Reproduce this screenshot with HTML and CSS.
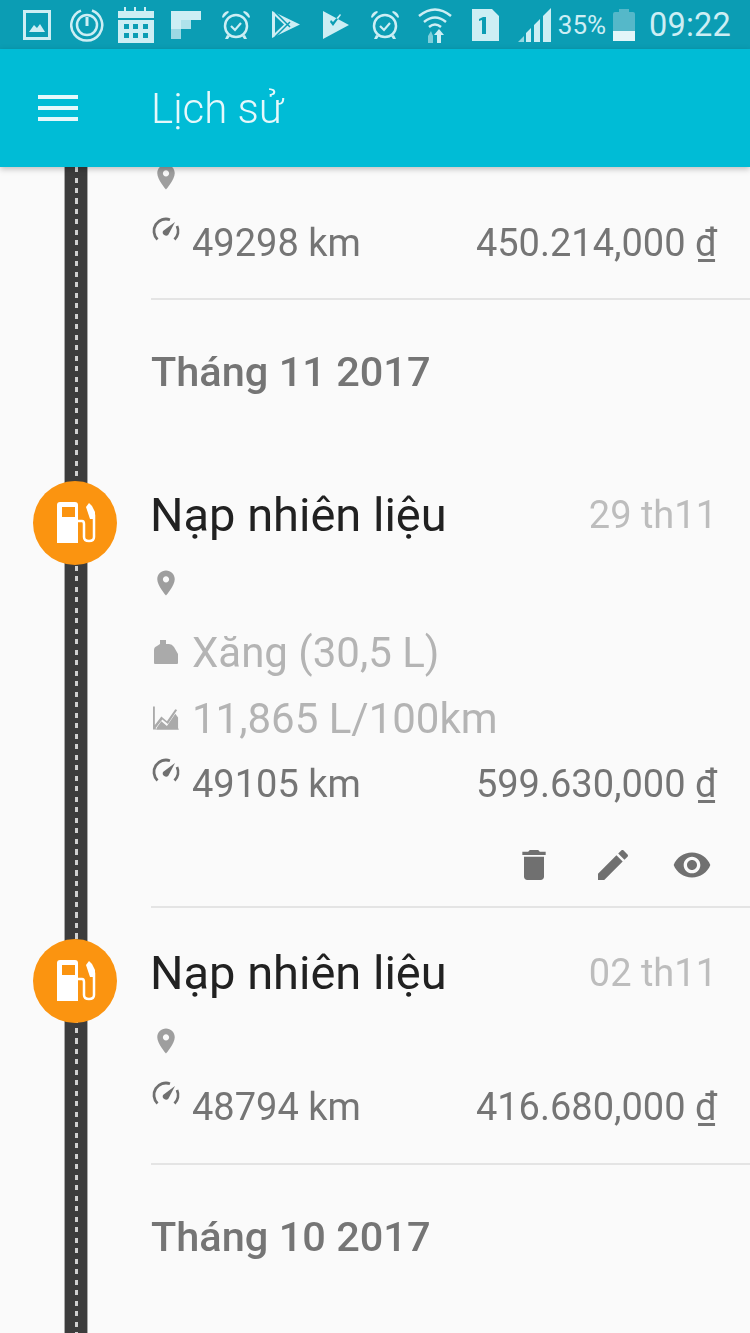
FILE: index.html
```html
<!DOCTYPE html>
<html lang="en">
<head>
    <meta charset="UTF-8">
    <meta name="viewport" content="width=device-width, initial-scale=1.0">
    <title>Lịch sử</title>
    <link rel="stylesheet" href="styles.css">
</head>
<body>
    <svg class="sprites" aria-hidden="true">
        <symbol id="i-pin" viewBox="0 0 24 24"><path d="M12 2C8.130 2 5 5.130 5 9c0 5.250 7 13 7 13s7-7.750 7-13c0-3.870-3.130-7-7-7zm0 9.500c-1.380 0-2.500-1.120-2.500-2.500s1.120-2.500 2.500-2.500 2.500 1.120 2.500 2.500-1.120 2.500-2.500 2.500z"/></symbol>
        <symbol id="i-gauge" viewBox="0 0 30 30">
            <path fill="none" stroke="currentColor" stroke-width="2.800" d="M6.500 23.500A12 12 0 0 1 19 3.700M26 10a12 12 0 0 1-2.500 13.500"/>
            <path d="M24 6 17.500 18.500a3.300 3.300 0 0 1-5.500-3.500z"/>
        </symbol>
        <symbol id="i-fuel" viewBox="0 0 84 84">
            <path fill="#fff" d="M24 24q0-3 3-3h15q3 0 3 3v38H24z"/>
            <rect x="29" y="26" width="13" height="10" fill="#fb9410"/>
            <path fill="none" stroke="#fff" stroke-width="2.500" d="M45 40h4q2 0 2 3v13q0 4 5 4t5-4V34l-4-8"/>
            <path fill="#fff" d="M53 26l3-4 3 3 3 6v7h-5z"/>
        </symbol>
        <symbol id="i-alarm" viewBox="0 0 32 32">
            <circle cx="16" cy="17" r="11" fill="none" stroke="currentColor" stroke-width="2.500"/>
            <path d="M2 8q1-5 6-6l1 1-6 6zM30 8q-1-5-6-6l-1 1 6 6zM7 26l-2 4h3l2-3zM25 26l2 4h-3l-2-3z"/>
            <path d="M11 17l4 4 6-7" fill="none" stroke="currentColor" stroke-width="2.200"/>
        </symbol>
    </svg>

    <div class="status-bar">
        <span class="slot">
            <svg width="28" height="30" viewBox="0 0 28 30"><path fill-rule="evenodd" d="M0 0h28v30H0zM3 3v24h22V3z"/><path d="M6 22l5-7 3 3 3-4 5 8z"/></svg>
        </span>
        <span class="slot">
            <svg width="34" height="34" viewBox="0 0 34 34"><path fill="none" stroke="currentColor" stroke-width="2.500" d="M22 2.500a15.500 15.500 0 1 1-11 .2"/><circle cx="17" cy="17" r="10" fill="none" stroke="currentColor" stroke-width="2.500"/><path d="M15.500 9h3v9h-3z"/></svg>
        </span>
        <span class="slot">
            <svg width="36" height="36" viewBox="0 0 36 36"><path d="M0 4h6V0h2v4h8V0h2v4h8V0h2v4h8v7H0z"/><path fill-rule="evenodd" d="M0 13h36v23H0zM6 17v5h5v-5zM15 17v5h5v-5zM25 17v5h5v-5zM6 26v5h5v-5zM15 26v5h5v-5zM25 26v5h5v-5z"/></svg>
        </span>
        <span class="slot">
            <svg width="30" height="28" viewBox="0 0 30 28"><path d="M0 0h30v9H10v9H0z"/><path opacity=".75" d="M0 18h10v10H0z"/><path opacity=".85" d="M10 9h10v9H10z"/></svg>
        </span>
        <span class="slot"><svg width="32" height="32"><use href="#i-alarm"/></svg></span>
        <span class="slot">
            <svg width="28" height="27" viewBox="0 0 28 27"><path fill-rule="evenodd" d="M0 0l28 13.500L0 27zM3 5v17l9-8.500z"/><path fill="none" stroke="#0b9db4" stroke-width="1.500" d="M3 1l15 15M3 26l15-15"/></svg>
        </span>
        <span class="slot">
            <svg width="26" height="28" viewBox="0 0 26 28"><path fill-rule="evenodd" d="M0 0l26 14L0 28zM7 11l3 4 8-11-1-1-7 8-2-2z"/></svg>
        </span>
        <span class="slot"><svg width="32" height="32"><use href="#i-alarm"/></svg></span>
        <span class="slot">
            <svg width="34" height="36" viewBox="0 0 34 36"><g fill="none" stroke="currentColor" stroke-width="2.500"><path d="M1 9q16-13 32 0"/><path d="M6 15q11-9 22 0"/><path d="M11 20q6-5 12 0"/></g><path opacity=".6" d="M10 36v-7l3-5 2 5v7z"/><path d="M21 22l5 6h-3v8h-4v-8h-3z"/></svg>
        </span>
        <span class="slot">
            <svg width="27" height="32" viewBox="0 0 27 32"><path fill-rule="evenodd" d="M0 0h20l7 7v25H0zM11 8l-4 2v2l3-1v14h4V8z"/></svg>
        </span>
        <span class="slot">
            <svg width="34" height="34" viewBox="0 0 34 34"><path opacity=".7" d="M0 34l6-6v6z"/><path d="M8 34V25l5-5v14zM16 34V17l6-6v23zM25 34V8l8-8v34z"/></svg>
        </span>
        <span class="battery-text">35%</span>
        <span class="battery"><span class="battery-level"></span></span>
        <span class="clock">09:22</span>
    </div>

    <header class="toolbar">
        <span class="menu-icon"><i></i><i></i><i></i></span>
        <h1>Lịch sử</h1>
    </header>

    <main class="timeline">
        <section class="entry">
            <div class="pin-stub"><svg class="icon-pin"><use href="#i-pin"/></svg></div>
            <div class="row odo-row first-odo">
                <svg class="icon-gauge"><use href="#i-gauge"/></svg>
                <span class="odo">49298 km</span>
                <span class="price">450.214,000 ₫</span>
            </div>
        </section>

        <h2 class="month">Tháng 11 2017</h2>

        <section class="entry full">
            <div class="marker"><svg width="84" height="84"><use href="#i-fuel"/></svg></div>
            <div class="title-row">
                <h3>Nạp nhiên liệu</h3>
                <span class="date">29 th11</span>
            </div>
            <div class="row pin-row"><svg class="icon-pin"><use href="#i-pin"/></svg></div>
            <div class="row muted fuel-row">
                <svg class="icon-small" viewBox="0 0 24 26"><path d="M0 11q0-3 3-4l3-2V1h6v4h3q3 0 5 3l4 7v9q0 1-1 1H1q-1 0-1-1z"/></svg>
                <span>Xăng (30,5 L)</span>
            </div>
            <div class="row muted">
                <svg class="icon-small" viewBox="0 0 28 25"><path d="M0 0h2v20l7-9 6 5 9-13 2 1-10 15-6-5-7 9v1h26v1H0z"/><path d="M4 25v-2l5-7 6 5 9-13 3 4v13z"/></svg>
                <span>11,865 L/100km</span>
            </div>
            <div class="row odo-row">
                <svg class="icon-gauge"><use href="#i-gauge"/></svg>
                <span class="odo">49105 km</span>
                <span class="price">599.630,000 ₫</span>
            </div>
            <div class="actions">
                <svg viewBox="0 0 24 24"><path d="M6 19c0 1.100.9 2 2 2h8c1.100 0 2-.9 2-2V7H6v12zM19 4h-3.500l-1-1h-5l-1 1H5v2h14V4z"/></svg>
                <svg viewBox="0 0 24 24"><path d="M3 17.250V21h3.750L17.810 9.940l-3.750-3.750L3 17.250zM20.710 7.040c.39-.39.39-1.020 0-1.410l-2.340-2.340c-.39-.39-1.020-.39-1.410 0l-1.830 1.830 3.750 3.750 1.830-1.830z"/></svg>
                <svg viewBox="0 0 24 24"><path d="M12 4.500C7 4.500 2.730 7.610 1 12c1.730 4.390 6 7.500 11 7.500s9.270-3.110 11-7.500c-1.730-4.390-6-7.500-11-7.500zM12 17c-2.760 0-5-2.240-5-5s2.240-5 5-5 5 2.240 5 5-2.240 5-5 5zm0-8c-1.660 0-3 1.340-3 3s1.340 3 3 3 3-1.340 3-3-1.340-3-3-3z"/></svg>
            </div>
        </section>

        <section class="entry next">
            <div class="marker"><svg width="84" height="84"><use href="#i-fuel"/></svg></div>
            <div class="title-row">
                <h3>Nạp nhiên liệu</h3>
                <span class="date">02 th11</span>
            </div>
            <div class="row pin-row"><svg class="icon-pin"><use href="#i-pin"/></svg></div>
            <div class="row odo-row">
                <svg class="icon-gauge"><use href="#i-gauge"/></svg>
                <span class="odo">48794 km</span>
                <span class="price">416.680,000 ₫</span>
            </div>
        </section>

        <h2 class="month">Tháng 10 2017</h2>
    </main>
</body>
</html>
```

FILE: styles.css
```css
* {
    box-sizing: border-box;
}

html, body {
    margin: 0;
    padding: 0;
}

body {
    width: 750px;
    height: 1333px;
    overflow: hidden;
    background-color: #fafafa;
    font-family: Roboto, sans-serif;
    filter: blur(0.5px);
}

.sprites {
    display: none;
}

/* status bar */
.status-bar {
    height: 49px;
    padding-left: 12px;
    display: flex;
    align-items: center;
    background-color: #0b9db4;
    color: #cdeef4;
    fill: #cdeef4;
}

.slot {
    width: 49.8px;
    display: flex;
    justify-content: center;
    align-items: center;
}

.battery-text {
    margin-left: -2px;
    font-size: 26px;
    letter-spacing: 0;
}

.battery {
    position: relative;
    width: 22px;
    height: 29px;
    margin-top: 3px;
    margin-left: 7px;
    background-color: #55b8c9;
    border-radius: 2px 2px 0 0;
}

.battery::before {
    content: "";
    position: absolute;
    left: 6px;
    top: -3px;
    width: 10px;
    height: 3px;
    background-color: #55b8c9;
}

.battery-level {
    position: absolute;
    left: 0;
    right: 0;
    bottom: 0;
    height: 10px;
    background-color: #e4f6f9;
}

.clock {
    margin-left: 14px;
    font-size: 32.5px;
    letter-spacing: 0.2px;
}

/* toolbar */
.toolbar {
    position: relative;
    z-index: 2;
    height: 118px;
    display: flex;
    align-items: center;
    background-color: #00bcd6;
    box-shadow: 0 2px 6px rgba(0, 0, 0, 0.25);
}

.menu-icon {
    width: 40px;
    margin-left: 38px;
    display: flex;
    flex-direction: column;
    gap: 7px;
}

.menu-icon i {
    display: block;
    height: 4px;
    background-color: #e6f8fb;
}

.toolbar h1 {
    margin: 0 0 0 73px;
    font-size: 42px;
    font-weight: 300;
    color: #e6f8fb;
}

/* road behind the list */
.timeline {
    position: relative;
    height: 1166px;
    padding-left: 151px;
}

.timeline::before {
    content: "";
    position: absolute;
    left: 64px;
    top: 0;
    bottom: 0;
    width: 22px;
    border-left: 1px solid #a8a8a8;
    border-right: 1px solid #a8a8a8;
    background-color: #3c3c3c;
    background-image: repeating-linear-gradient(to bottom, #d0d0d0 0, #d0d0d0 5px, transparent 5px, transparent 10.5px);
    background-size: 3px 100%;
    background-position: center;
    background-repeat: no-repeat;
}

.entry {
    position: relative;
    padding-right: 33px;
    border-bottom: 2px solid #e4e4e4;
    padding-bottom: 22px;
}

.entry.full {
    padding-top: 36px;
    padding-bottom: 0;
}

.entry.next {
    padding-top: 30px;
    padding-bottom: 23px;
}

.pin-stub {
    height: 20px;
    display: flex;
    align-items: center;
}

.first-odo {
    margin-top: 23px;
}

.month {
    margin: 0;
    height: 142px;
    margin-bottom: 2px;
    display: flex;
    align-items: center;
    font-size: 41.5px;
    font-weight: 500;
    color: #757575;
}

.marker {
    position: absolute;
    left: -118px;
    top: 37px;
    width: 84px;
    height: 84px;
    border-radius: 50%;
    background-color: #fb9410;
}

.entry.next .marker {
    top: 31px;
}

.title-row {
    height: 70px;
    display: flex;
    justify-content: space-between;
    align-items: center;
}

.title-row h3 {
    margin: -2px 0 0 -1px;
    font-size: 47px;
    font-weight: 400;
    color: #212121;
}

.date {
    font-size: 38px;
    color: #bdbdbd;
}

.row {
    height: 66px;
    display: flex;
    align-items: center;
    font-size: 38px;
}

.fuel-row {
    margin-top: 3px;
}

.muted {
    font-size: 42px;
    color: #b4b4b4;
}

.odo-row {
    color: #757575;
    justify-content: space-between;
}

.odo {
    margin-left: 11px;
    margin-right: auto;
}

.icon-pin {
    width: 30px;
    height: 32px;
    fill: #9e9e9e;
}

.icon-gauge {
    width: 30px;
    height: 30px;
    margin-top: -24px;
    color: #707070;
    fill: #707070;
}

.icon-small {
    width: 30px;
    height: 26px;
    padding: 0 2px;
    margin-right: 11px;
    fill: #aaaaaa;
}

.actions {
    height: 89px;
    padding-top: 28px;
    padding-right: 5px;
    display: flex;
    justify-content: flex-end;
    gap: 39px;
}

.actions svg {
    width: 40px;
    height: 40px;
    fill: #707070;
}
```
